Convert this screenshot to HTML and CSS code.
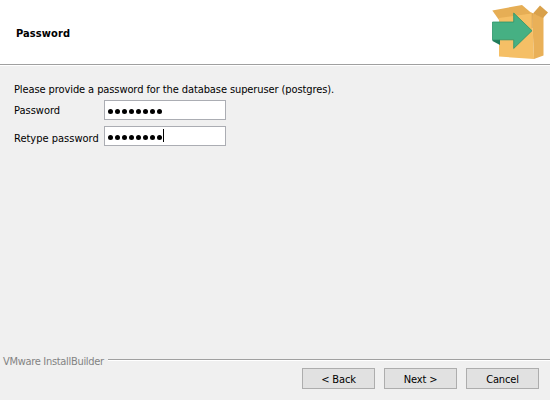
FILE: index.html
```html
<!DOCTYPE html>
<html lang="en">
<head>
<meta charset="utf-8">
<title>Setup</title>
<link rel="stylesheet" href="styles.css">
</head>
<body>
<div class="wizard">
  <header class="header">
    <h1 class="title">Password</h1>
    <svg class="logo" viewBox="0 0 65 62" width="65" height="62" aria-hidden="true">
      <path fill="#f5bf66" d="M14 15 47 12.500 49 59 14 56.500Z"/>
      <path fill="#e9b058" d="M47 13 58.500 17V55.500L49 59Z"/>
      <path fill="#e6ae55" d="M7.300 10.500 37 5 47 13.500 14 20Z"/>
      <path fill="#f5bf66" d="M14 18 47 13.500V24H14Z"/>
      <path fill="#d9a14b" d="M48 13.500 55 5.500 63 12.500 58 18Z"/>
      <path fill="none" stroke="#d49c48" stroke-width=".7" d="M47.200 13V28"/>
      <path fill="#217b59" d="M7.500 39.500H15V45L7.500 41Z"/>
      <path fill="#46b083" stroke="#2b946a" stroke-width=".8" d="M7.500 22H28.700V13L47 30.700 28.700 48.500V39.800H7.500Z"/>
    </svg>
  </header>
  <main class="content">
    <p class="intro">Please provide a password for the database superuser (postgres).</p>
    <div class="row">
      <label class="label">Password</label>
      <div class="field"><i></i><i></i><i></i><i></i><i></i><i></i><i></i><i></i></div>
    </div>
    <div class="row">
      <label class="label label-low">Retype password</label>
      <div class="field"><i></i><i></i><i></i><i></i><i></i><i></i><i></i><i></i><b class="caret"></b></div>
    </div>
  </main>
  <footer class="footer">
    <div class="brand"><span class="brand-name">VMware InstallBuilder</span><span class="rule"></span></div>
    <div class="buttons">
      <button class="button">&lt; Back</button>
      <button class="button">Next &gt;</button>
      <button class="button">Cancel</button>
    </div>
  </footer>
</div>
</body>
</html>
```
FILE: styles.css
```css
* { box-sizing: border-box; }
body {
  margin: 0;
  font: 11px/14px Tahoma, "DejaVu Sans Condensed", "DejaVu Sans", sans-serif;
  font-stretch: condensed;
  color: #000;
}
.wizard {
  width: 550px;
  height: 400px;
  display: flex;
  flex-direction: column;
  background: #f0f0f0;
}
.header {
  height: 66px;
  display: flex;
  justify-content: space-between;
  background: #fff;
  border-bottom: 1px solid #fff;
  box-shadow: inset 0 -1px #a0a0a0;
}
.title {
  margin: 27px 0 0 16px;
  font-size: 11px;
  line-height: 14px;
  font-weight: bold;
  letter-spacing: .1px;
}
.content { flex: 1; padding: 17px 14px 0; }
.intro { margin: 0 0 3px; height: 14px; white-space: nowrap; letter-spacing: -.095px; }
.row { display: flex; height: 20px; margin-bottom: 6px; }
.label { width: 90px; padding-top: 4px; white-space: nowrap; }
.label-low { padding-top: 6px; }
.field {
  width: 122px;
  height: 20px;
  display: flex;
  align-items: center;
  gap: 2px;
  padding: 2px 0 0 3px;
  background: #fff;
  border: 1px solid #abadb3;
}
.field i { width: 5px; height: 5px; border-radius: 50%; background: #000; }
.caret { width: 1px; height: 13px; margin: -3px 0 0 -1px; background: #000; }
.footer { height: 46px; }
.brand { display: flex; height: 14px; padding-left: 3px; color: #838383; white-space: nowrap; }
.brand-name { width: 101px; padding-top: 1px; letter-spacing: -.31px; }
.rule {
  flex: 1;
  height: 2px;
  margin: 5px 0 0 4px;
  border-top: 1px solid #a0a0a0;
  background: #fff;
}
.buttons { display: flex; justify-content: flex-end; gap: 9px; padding-right: 11px; }
.button {
  width: 73px;
  height: 21px;
  padding: 2px 0 0;
  font: inherit;
  letter-spacing: -.15px;
  color: #000;
  background: #e1e1e1;
  border: 1px solid #adadad;
}
```
